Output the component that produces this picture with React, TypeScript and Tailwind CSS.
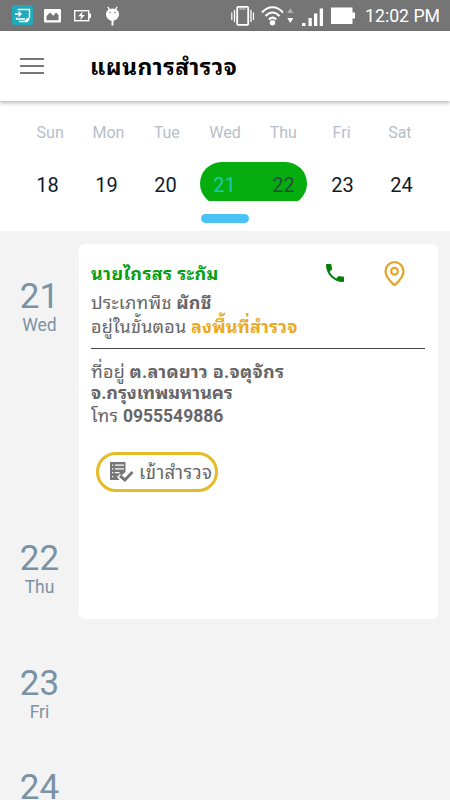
import { LuMapPin } from "react-icons/lu";
import { MdPhone } from "react-icons/md";

const weekDays = ["Sun", "Mon", "Tue", "Wed", "Thu", "Fri", "Sat"];

const dates = [
  { day: 18, color: "text-[#101c28]" },
  { day: 19, color: "text-[#101c28]" },
  { day: 20, color: "text-[#101c28]" },
  { day: 21, color: "text-[#1fc8b4]" },
  { day: 22, color: "text-[#20503c]" },
  { day: 23, color: "text-[#101c28]" },
  { day: 24, color: "text-[#101c28]" },
];

function StatusBar() {
  return (
    <header className="flex h-[31px] shrink-0 items-center bg-[#757575] text-white">
      <svg width="450" height="31" viewBox="0 0 450 31" fill="none" className="w-[365px] shrink-0" preserveAspectRatio="xMinYMin slice">
        <rect x="12" y="5" width="21" height="20" rx="2.5" fill="#20a8bb" />
        <path d="M17.500 9.500h12V18M16.500 17.500v1.500H25M15 14h6M18.500 11.500 21 14l-2.500 2.500M19 21.500h6" stroke="#fff" strokeWidth="1.400" />
        <path d="m25 20 3-2.500 1.800 1.500-2.300 3.200h-2.500z" fill="#fff" />
        <path fillRule="evenodd" d="M45 9h15a1 1 0 0 1 1 1v11.500a1 1 0 0 1-1 1H45a1 1 0 0 1-1-1V10a1 1 0 0 1 1-1zm1.500 11.300h12V15l-2.500-2.500-2.600 3.300-3.400-3.300-3.500 3.800z" fill="#fff" />
        <rect x="74.700" y="10.700" width="14" height="10" stroke="#fff" strokeWidth="1.400" />
        <path d="M89 13.500h2v4.500h-2z" fill="#fff" />
        <path d="m82.800 11.300-4.600 5h3l-1.200 4 4.800-5.200h-3z" fill="#fff" />
        <path d="m107.800 6.800 2.500 4M117.200 6.800l-2.500 4" stroke="#fff" strokeWidth="1.300" />
        <path d="M106 14a6.500 5.500 0 0 1 13 0c0 3.800-3 6.800-6.500 6.800S106 17.800 106 14z" fill="#fff" />
        <path d="M112.500 20v5.500" stroke="#fff" strokeWidth="2" />
        <circle cx="110" cy="12.500" r=".8" fill="#757575" />
        <circle cx="115" cy="12.500" r=".8" fill="#757575" />
        <rect x="237.200" y="6.800" width="11" height="18" rx="1" stroke="#fff" strokeWidth="1.800" />
        <path d="M239.500 9h6.500" stroke="#fff" strokeWidth="1" strokeDasharray="2 1" />
        <path d="M234.500 10v12M251 10v12" stroke="#fff" strokeWidth="1.300" />
        <path d="M231.800 12.500v7.500M253.500 12.500v7.500" stroke="#fff" strokeWidth="1.200" />
        <path d="M262 12.500c6-7 15-7 21 0M265.500 16c4.500-4.700 9.500-4.700 14 0M268.800 19.500c2.500-2.500 5-2.500 7.500 0" stroke="#fff" strokeWidth="2" />
        <circle cx="272.500" cy="22.700" r="2.700" fill="#fff" />
        <path d="m290.300 8 3 5h-6z" fill="#b2b2b2" />
        <path d="m290.300 23 3-5h-6z" fill="#fff" />
        <path d="M302 23h3.500v3H302zM308.500 18h3.300v8h-3.300zM314 13.500h3.300V26H314zM319.700 8.500h3.300V26h-3.300z" fill="#fff" />
        <path d="M331 7.500h21.500v5h2.500v6h-2.500V24H331z" fill="#fff" />
      </svg>
      <span className="mt-[2px] whitespace-nowrap text-[17.700px] leading-none">12:02 PM</span>
    </header>
  );
}

function AppBar() {
  return (
    <div className="relative z-10 flex h-[70px] shrink-0 items-center bg-white pl-5 shadow-[0_2px_4px_rgba(0,0,0,0.28)]">
      <button className="flex w-6 flex-col gap-[5px]" aria-label="Menu">
        <span className="h-[2px] w-full bg-[#777]" />
        <span className="h-[2px] w-full bg-[#777]" />
        <span className="h-[2px] w-full bg-[#777]" />
      </button>
      <h1 className="ml-[46px] mt-[3px] whitespace-nowrap text-[23px] font-bold leading-none tracking-[0.500px] text-black">แผนการสำรวจ</h1>
    </div>
  );
}

function WeekStrip() {
  return (
    <section className="flex h-[130px] shrink-0 flex-col bg-white">
      <div className="ml-[21px] mt-[21px] grid h-5 w-[408px] grid-cols-7 text-center text-[16px] leading-[21px] text-[#b6bec8]">
        {weekDays.map((name) => (
          <span key={name}>{name}</span>
        ))}
      </div>
      <div className="relative mt-5 h-[39px] overflow-hidden">
        <div className="absolute left-[200px] top-0 h-[43px] w-[107px] rounded-full bg-[#05ae0e]" />
        <div className="relative ml-[18px] grid w-[413px] grid-cols-7 text-center text-[20px] leading-[46px]">
          {dates.map(({ day, color }) => (
            <span key={day} className={color}>{day}</span>
          ))}
        </div>
      </div>
      <div className="ml-[201px] mt-[13px] h-[9px] w-12 rounded-full bg-[#4ac4f7]" />
    </section>
  );
}

function AgendaDay({ day, name }: { day: number; name?: string }) {
  return (
    <div className="flex w-[79px] flex-col items-center text-[#7a92a5]">
      <span className="text-[35px] leading-10">{day}</span>
      {name && <span className="text-[17.500px] leading-4">{name}</span>}
    </div>
  );
}

function SurveyCard() {
  return (
    <article className="mt-[13px] h-[375px] w-[359px] rounded-[6px] bg-white pl-3 pr-[13px] text-[18px] tracking-[0.200px] text-[#666]">
      <div className="flex h-[46px] items-start pt-[17px]">
        <h2 className="w-[232px] whitespace-nowrap font-bold leading-[26px] tracking-[0.350px] text-[#05a00e]">นายไกรสร ระกัม</h2>
        <MdPhone className="size-6 shrink-0 text-[#04800a]" />
        <LuMapPin className="ml-[34px] -mt-[1px] size-[27px] shrink-0 text-[#e2a62b]" />
      </div>
      <p className="h-6 whitespace-nowrap leading-[26px]">ประเภทพืช <b>ผักชี</b></p>
      <p className="h-[34px] whitespace-nowrap leading-[26px]">อยู่ในขั้นตอน <b className="tracking-[0.100px] text-[#e9aa22]">ลงพื้นที่สำรวจ</b></p>
      <div className="h-px bg-[#444]" />
      <p className="mt-[11px] h-[22px] whitespace-nowrap leading-[24px]">ที่อยู่ <b className="tracking-[0.250px]">ต.ลาดยาว อ.จตุจักร</b></p>
      <p className="h-[22px] whitespace-nowrap leading-[22px]"><b className="tracking-[-0.100px]">จ.กรุงเทพมหานคร</b></p>
      <p className="h-[24px] whitespace-nowrap leading-[24px]">โทร <b className="text-[17.500px] tracking-normal">0955549886</b></p>
      <button className="ml-[5px] mt-[24px] flex h-10 w-[122px] items-center rounded-full border-[3px] border-[#e5bb28] pl-[11px]">
        <svg width="25" height="20" viewBox="0 0 25 20" className="shrink-0" fill="#777">
          <path fillRule="evenodd" d="M0 0h15.500v10l-4 3.500-1.500-1.500-3 3L9.500 18H0zM2 2.500v1.300h1.300V2.500zm3 0v1.300h9V2.500zM2 6.200v1.300h1.300V6.200zm3 0v1.300h9V6.200zM2 10v1.300h1.300V10zm3 0v1.300h4.500V10zM2 14v1.300h1.300V14z" />
          <path d="m9 15 2-2.200 3.800 3.200 6.700-7 2 2-8.500 9z" />
        </svg>
        <span className="ml-[4px] mt-[2px] whitespace-nowrap text-[18.500px] leading-none tracking-[0.450px]">เข้าสำรวจ</span>
      </button>
    </article>
  );
}

export default function App() {
  return (
    <main className="flex h-[800px] w-[450px] flex-col overflow-hidden bg-[#f3f3f3] font-[Roboto,'Noto_Sans_Thai_Looped','Droid_Sans_Thai',Loma,Garuda,Waree,'Noto_Sans_Thai','Noto_Sans',sans-serif]">
      <StatusBar />
      <AppBar />
      <WeekStrip />
      <section className="flex h-[400px] shrink-0">
        <div className="flex w-[79px] shrink-0 flex-col gap-[206px] pt-[46px]">
          <AgendaDay day={21} name="Wed" />
          <AgendaDay day={22} name="Thu" />
        </div>
        <SurveyCard />
      </section>
      <section className="flex shrink-0 flex-col gap-12 pt-[33px]">
        <AgendaDay day={23} name="Fri" />
        <AgendaDay day={24} />
      </section>
    </main>
  );
}
